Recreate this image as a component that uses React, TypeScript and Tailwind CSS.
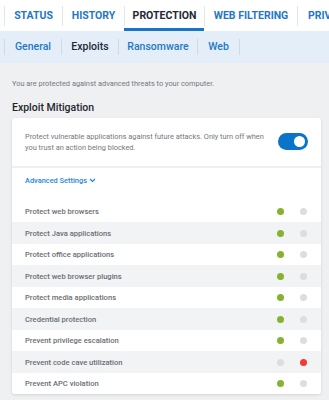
const TABS = [
  { label: "STATUS", w: "w-[58px]" },
  { label: "HISTORY", w: "w-[62px]" },
  { label: "PROTECTION", w: "w-[80px]", active: true },
  { label: "WEB FILTERING", w: "w-[93px]" },
];

const SUBTABS = [
  { label: "General", w: "w-[57px]" },
  { label: "Exploits", w: "w-[57px]", active: true },
  { label: "Ransomware", w: "w-[79px]" },
  { label: "Web", w: "w-[42px]" },
];

type Dot = "on" | "off";

const ROWS: { label: string; state: Dot }[] = [
  { label: "Protect web browsers", state: "on" },
  { label: "Protect Java applications", state: "on" },
  { label: "Protect office applications", state: "on" },
  { label: "Protect web browser plugins", state: "on" },
  { label: "Protect media applications", state: "on" },
  { label: "Credential protection", state: "on" },
  { label: "Prevent privilege escalation", state: "on" },
  { label: "Prevent code cave utilization", state: "off" },
  { label: "Prevent APC violation", state: "on" },
];

export default function App() {
  return (
    <div className="w-[329px] h-[400px] overflow-hidden bg-[#eff0f2] font-['Roboto',sans-serif]">
      {/* top tabs */}
      <div className="flex h-[31px] bg-white whitespace-nowrap overflow-hidden">
        <div className="w-[4px] shrink-0" />
        {TABS.map((t) => (
          <div key={t.label} className={`relative shrink-0 flex items-center ${t.w}`}>
            <span className="w-px h-[20px] bg-[#e3e5e8]" />
            <span
              className={`flex-1 text-center text-[10.5px] font-bold ${
                t.active ? "text-[#1e2836]" : "text-[#1f78c6]"
              }`}
            >
              {t.label}
            </span>
            {t.active && <span className="absolute left-0 right-0 bottom-0 h-[3px] bg-[#1a74c6]" />}
          </div>
        ))}
        <div className="shrink-0 flex items-center">
          <span className="w-px h-[20px] bg-[#e3e5e8]" />
          <span className="pl-[10px] text-[10.5px] font-bold text-[#1f78c6]">PRIVACY</span>
        </div>
      </div>

      {/* sub tabs */}
      <div className="flex h-[32px] bg-[#e3eef8] items-center whitespace-nowrap">
        <div className="w-[4px] shrink-0" />
        {SUBTABS.map((t) => (
          <div key={t.label} className={`shrink-0 flex items-center ${t.w}`}>
            <span className="w-px h-[16px] bg-[#cfdae6]" />
            <span
              className={`flex-1 text-center text-[10.5px] font-medium ${
                t.active ? "text-[#1e2836]" : "text-[#1f78c6]"
              }`}
            >
              {t.label}
            </span>
          </div>
        ))}
        <span className="w-px h-[16px] bg-[#cfdae6]" />
      </div>

      <div className="pl-[12px] pr-[8px]">
        <p className="pt-[15px] text-[7.4px] text-[#75787d]">
          You are protected against advanced threats to your computer.
        </p>
        <h2 className="mt-[11px] text-[10.5px] font-medium text-[#23272d]">Exploit Mitigation</h2>

        <div className="mt-[2px] bg-white rounded-[3px] shadow-[0_1px_3px_rgba(0,0,0,0.12)] overflow-hidden">
          <div className="flex items-center gap-[6px] pl-[13px] pr-[13px] pt-[13px] pb-[13px]">
            <p className="flex-1 text-[7.4px] leading-[11px] text-[#75787d]">
              Protect vulnerable applications against future attacks. Only turn off when you trust an action being
              blocked.
            </p>
            <div className="w-[30px] h-[17px] rounded-full bg-[#0a74c8] flex items-center justify-end pr-[3px] shrink-0">
              <span className="w-[11px] h-[11px] rounded-full bg-white" />
            </div>
          </div>
          <div className="h-[2px] bg-[#eff0f2]" />
          <div className="pl-[13px] pt-[7px] pb-[15px] flex items-center gap-[2px] text-[7.4px] font-medium text-[#1f86d6]">
            Advanced Settings
            <svg width="7" height="5" viewBox="0 0 7 5" fill="none" stroke="#1f86d6" strokeWidth="1.2">
              <path d="M1 1l2.5 2.5L6 1" />
            </svg>
          </div>
          {ROWS.map((r, i) => (
            <div
              key={r.label}
              className={`flex items-center h-[21.5px] pl-[13px] pr-[14px] ${i % 2 === 1 ? "bg-[#f2f3f5]" : "bg-white"}`}
            >
              <span className="flex-1 text-[7.6px] font-medium text-[#6b6e73]">{r.label}</span>
              <span className={`w-[7px] h-[7px] rounded-full ${r.state === "on" ? "bg-[#86b32d]" : "bg-[#dcdddf]"}`} />
              <span
                className={`ml-[16px] w-[7px] h-[7px] rounded-full ${
                  r.state === "on" ? "bg-[#dcdddf]" : "bg-[#f23a36]"
                }`}
              />
            </div>
          ))}
        </div>
      </div>
    </div>
  );
}
